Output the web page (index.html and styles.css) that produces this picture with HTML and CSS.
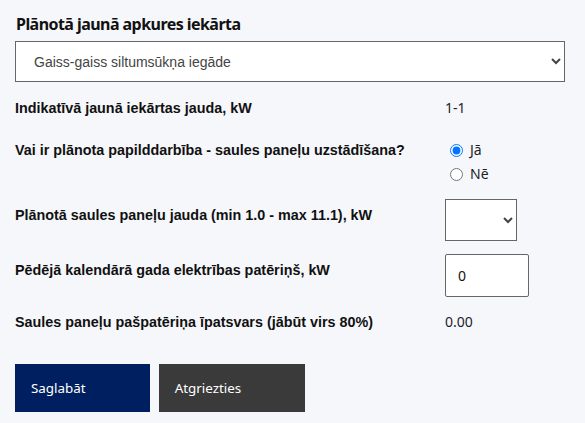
FILE: index.html
```html
<!DOCTYPE html>
<html lang="lv">
<head>
<meta charset="utf-8">
<link rel="stylesheet" href="styles.css">
</head>
<body>
<form class="form">
  <h2 class="title">Plānotā jaunā apkures iekārta</h2>
  <select class="select select-wide">
    <option>Gaiss-gaiss siltumsūkņa iegāde</option>
  </select>

  <div class="rows">
    <div class="row">
      <div class="label">Indikatīvā jaunā iekārtas jauda, kW</div>
      <div class="value">1-1</div>
    </div>
    <div class="row row-radio">
      <div class="label">Vai ir plānota papilddarbība - saules paneļu uzstādīšana?</div>
      <div class="radios">
        <label class="radio"><input type="radio" name="sp" checked> Jā</label>
        <label class="radio"><input type="radio" name="sp"> Nē</label>
      </div>
    </div>
    <div class="row">
      <div class="label label-pad">Plānotā saules paneļu jauda (min 1.0 - max 11.1), kW</div>
      <div><select class="select select-small"><option></option></select></div>
    </div>
    <div class="row">
      <div class="label label-pad">Pēdējā kalendārā gada elektrības patēriņš, kW</div>
      <div><input class="input" type="text" value="0"></div>
    </div>
    <div class="row">
      <div class="label">Saules paneļu pašpatēriņa īpatsvars (jābūt virs 80%)</div>
      <div class="value">0.00</div>
    </div>
  </div>

  <div class="actions">
    <button type="button" class="btn btn-primary">Saglabāt</button>
    <button type="button" class="btn btn-dark">Atgriezties</button>
  </div>
</form>
</body>
</html>
```

FILE: styles.css
```css
html, body {
  margin: 0;
  padding: 0;
  background: #f6f7fb;
}
body {
  padding: 13px 20px 0 15px;
  font-family: "Liberation Sans", Arial, sans-serif;
  color: #111;
}
.form {
  display: flex;
  flex-direction: column;
  align-items: flex-start;
}
.title {
  margin: 0 0 0 1px;
  font-family: "Noto Sans", sans-serif;
  font-weight: 700;
  font-size: 16px;
  line-height: 22px;
  letter-spacing: -0.55px;
  color: #111;
}
.select {
  font-family: "Liberation Sans", Arial, sans-serif;
  font-size: 14px;
  color: #444;
  background: #fff;
  border: 1px solid #666;
  border-radius: 0;
}
.select-wide {
  margin-top: 6px;
  width: 550px;
  height: 41px;
  padding: 0 0 0 14px;
}
.select-small {
  width: 72px;
  height: 42px;
}
.rows {
  display: flex;
  flex-direction: column;
  gap: 13px;
  margin-top: 14px;
  width: 550px;
}
.row {
  display: grid;
  grid-template-columns: 430px 1fr;
  align-items: start;
}
.row-radio {
  margin-top: 5px;
}
.label {
  font-weight: 700;
  font-size: 14.35px;
  line-height: 24px;
}
.label-pad {
  padding-top: 4px;
}
.value {
  font-family: "Noto Sans", sans-serif;
  font-size: 14px;
  line-height: 24px;
  color: #1c1c2a;
}
.radios {
  display: flex;
  flex-direction: column;
}
.radio {
  display: flex;
  align-items: center;
  gap: 7px;
  font-family: "Noto Sans", sans-serif;
  font-size: 14px;
  line-height: 24px;
  color: #1c1c2a;
}
.radio input {
  margin: 0 0 0 5px;
  width: 13px;
  height: 13px;
}
.input {
  box-sizing: border-box;
  width: 84px;
  height: 43px;
  padding: 0 12px;
  font-family: "Noto Sans", sans-serif;
  font-size: 14px;
  color: #111;
  background: #fff;
  border: 1px solid #666;
  border-radius: 2px;
}
.actions {
  display: flex;
  gap: 9px;
  margin-top: 30px;
}
.btn {
  height: 48px;
  padding: 0 64px 0 16px;
  border: none;
  border-radius: 0;
  font-family: "Noto Sans", sans-serif;
  font-size: 13.4px;
  color: #fff;
  text-align: left;
}
.btn-primary {
  background: #001f60;
}
.btn-dark {
  background: #3a3a3a;
}
```
